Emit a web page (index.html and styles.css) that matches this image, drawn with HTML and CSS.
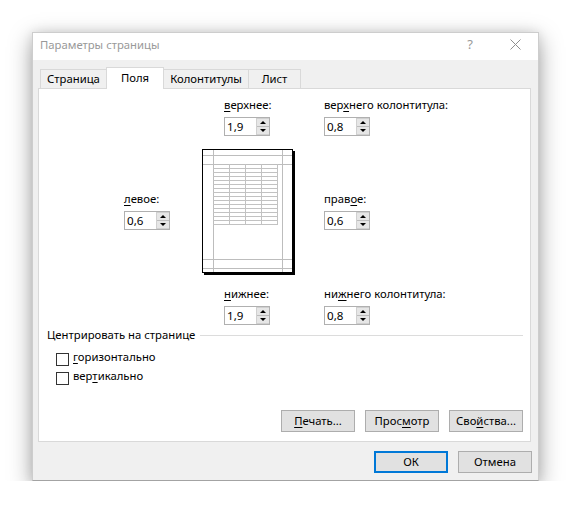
FILE: index.html
```html
<!DOCTYPE html>
<html lang="ru">
<head>
<meta charset="utf-8">
<title>Параметры страницы</title>
<link rel="stylesheet" href="styles.css">
</head>
<body>
<div class="dialog">
  <div class="titlebar">
    <div class="title">Параметры страницы</div>
    <div class="cap help">?</div>
    <div class="cap close"><svg width="11" height="11" viewBox="0 0 11 11"><path d="M0.5 0.5L10.5 10.5M10.5 0.5L0.5 10.5" stroke="#8f8f8f" stroke-width="1" fill="none"/></svg></div>
  </div>
  <div class="body">
    <div class="tabs">
      <div class="tab t1">Страница</div>
      <div class="tab t2 active">Поля</div>
      <div class="tab t3">Колонтитулы</div>
      <div class="tab t4">Лист</div>
    </div>
    <div class="panel">
      <div class="row row-edge row-top">
        <div class="field">
          <div class="lbl"><u>в</u>ерхнее:</div>
          <div class="spin"><span class="val">1,9</span><span class="btns"><i class="up"></i><i class="down"></i></span></div>
        </div>
        <div class="field">
          <div class="lbl">вер<u>х</u>него колонтитула:</div>
          <div class="spin"><span class="val">0,8</span><span class="btns"><i class="up"></i><i class="down"></i></span></div>
        </div>
      </div>
      <div class="row row-mid">
        <div class="field side left">
          <div class="lbl"><u>л</u>евое:</div>
          <div class="spin"><span class="val">0,6</span><span class="btns"><i class="up"></i><i class="down"></i></span></div>
        </div>
        <svg class="preview" width="93" height="126" viewBox="0 0 93 126" shape-rendering="crispEdges">
          <rect x="2" y="2" width="91" height="124" fill="#000"/>
          <rect x="0.5" y="0.5" width="90" height="123" fill="#fff" stroke="#000"/>
          <path d="M11.5 1V123M80.5 1V123M1 6.5H90M1 15.5H90M1 110.5H90M1 119.5H90" stroke="#bdbdbd" fill="none"/>
          <path d="M27.5 15V76M43.5 15V76M59.5 15V76M75.5 15V76M11 19.5H76M11 23.5H76M11 27.5H76M11 31.5H76M11 35.5H76M11 39.5H76M11 43.5H76M11 47.5H76M11 51.5H76M11 55.5H76M11 59.5H76M11 63.5H76M11 67.5H76M11 71.5H76M11 75.5H76" stroke="#c2c2c2" fill="none"/>
        </svg>
        <div class="field side right">
          <div class="lbl">прав<u>о</u>е:</div>
          <div class="spin"><span class="val">0,6</span><span class="btns"><i class="up"></i><i class="down"></i></span></div>
        </div>
      </div>
      <div class="row row-edge row-bot">
        <div class="field">
          <div class="lbl"><u>н</u>ижнее:</div>
          <div class="spin"><span class="val">1,9</span><span class="btns"><i class="up"></i><i class="down"></i></span></div>
        </div>
        <div class="field">
          <div class="lbl">ни<u>ж</u>него колонтитула:</div>
          <div class="spin"><span class="val">0,8</span><span class="btns"><i class="up"></i><i class="down"></i></span></div>
        </div>
      </div>
      <div class="group">
        <div class="group-head"><span>Центрировать на странице</span><span class="rule"></span></div>
        <div class="check first"><span class="box"></span><span><u>г</u>оризонтально</span></div>
        <div class="check"><span class="box"></span><span>вер<u>т</u>икально</span></div>
      </div>
      <div class="panel-buttons">
        <div class="btn"><span><u>П</u>ечать...</span></div>
        <div class="btn"><span>Прос<u>м</u>отр</span></div>
        <div class="btn"><span>Сво<u>й</u>ства...</span></div>
      </div>
    </div>
    <div class="dialog-buttons">
      <div class="btn default">ОК</div>
      <div class="btn">Отмена</div>
    </div>
  </div>
</div>
</body>
</html>
```
FILE: styles.css
```css
* { box-sizing: border-box; }
html, body { margin: 0; background: #fff; }
body {
  padding: 32px 0 0 32px;
  font-family: "Noto Sans", "Segoe UI", sans-serif;
  font-size: 11.3px;
  color: #000;
}
u { text-decoration: underline; text-underline-offset: 2px; text-decoration-thickness: 1px; }

.dialog {
  width: 507px;
  height: 449px;
  background: #f0f0f0;
  border: 1px solid #cdcdcd;
  border-bottom-color: #a3a3a3;
  box-shadow: 0 7px 22px rgba(0,0,0,.36), 0 0 10px rgba(0,0,0,.09);
  display: flex;
  flex-direction: column;
}

.titlebar { height: 27px; background: #fff; display: flex; }
.title { flex: 1; padding: 4px 0 0 7px; line-height: 16px; color: #999; }
.cap { width: 46px; display: flex; justify-content: center; color: #999; }
.help { padding-top: 3px; font-size: 13px; line-height: 16px; }
.close { width: 45px; padding-top: 6px; }

.body { flex: 1; padding: 7px 0 0 5px; }
.tabs { display: flex; align-items: flex-end; height: 21px; padding-left: 2px; }
.tab {
  height: 19px;
  border: 1px solid #d9d9d9;
  border-bottom: none;
  background: #f0f0f0;
  line-height: 18px;
  text-align: center;
  margin-left: -1px;
}
.tab.t1 { width: 67px; margin-left: 0; }
.tab.t2 { width: 58px; }
.tab.t3 { width: 86px; }
.tab.t4 { width: 53px; }
.tab.active {
  height: 22px;
  background: #fff;
  margin-bottom: -1px;
  line-height: 19px;
  position: relative;
  z-index: 1;
}

.panel {
  width: 493px;
  height: 354px;
  background: #fff;
  border: 1px solid #d9d9d9;
  display: flex;
  flex-direction: column;
}

.row { display: flex; }
.row-edge { padding-left: 185px; }
.row-top { margin-top: 8px; }
.row-mid { margin-top: 13px; padding-left: 85px; align-items: center; }
.row-bot { margin-top: 11px; }
.field { width: 100px; }
.side { padding-bottom: 3px; }
.side.left { width: 78px; }
.side.right { margin-left: 29px; }
.lbl { line-height: 16px; margin-bottom: 4px; white-space: nowrap; }
.preview { display: block; }

.spin {
  width: 46px;
  height: 19px;
  border: 1px solid #b0b0b0;
  display: flex;
  background: #fff;
}
.val { flex: 1; padding-left: 2px; line-height: 17px; font-size: 11.6px; }
.btns {
  width: 13px;
  display: flex;
  flex-direction: column;
  background: #e6e6e6;
  border: 1px solid #d0d0d0;
  border-right: none;
}
.btns i { flex: 1; display: flex; align-items: center; justify-content: center; }
.btns i.up { border-bottom: 1px solid #bdbdbd; }
.btns i::before { content: ""; width: 0; height: 0; border-left: 3px solid transparent; border-right: 3px solid transparent; }
.btns i.up::before { border-bottom: 3px solid #000; }
.btns i.down::before { border-top: 3px solid #000; }

.group { padding: 0 7px 0 8px; margin-top: 2px; }
.group-head { display: flex; align-items: center; gap: 5px; line-height: 16px; }
.rule { flex: 1; height: 1px; background: #dcdcdc; }
.check { display: flex; align-items: center; height: 19px; padding-left: 9px; gap: 4px; }
.check.first { margin-top: 4px; }
.box { width: 13px; height: 13px; border: 1px solid #333; background: #fff; margin-top: 5px; }

.panel-buttons {
  margin-top: auto;
  margin-bottom: 9px;
  padding-right: 7px;
  display: flex;
  justify-content: flex-end;
  gap: 10px;
}
.btn {
  width: 74px;
  height: 22px;
  border: 1px solid #adadad;
  background: #e1e1e1;
  display: flex;
  align-items: center;
  justify-content: center;
  line-height: 16px;
}
.btn.default { border: 2px solid #0078d7; }

.dialog-buttons {
  margin-top: 9px;
  padding-right: 6px;
  display: flex;
  justify-content: flex-end;
  gap: 10px;
}
```
